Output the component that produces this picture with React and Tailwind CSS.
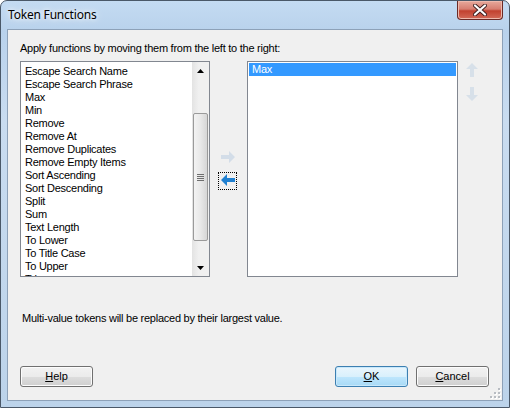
import { useState } from 'react'

const left = [
  'Escape Search Name',
  'Escape Search Phrase',
  'Max',
  'Min',
  'Remove',
  'Remove At',
  'Remove Duplicates',
  'Remove Empty Items',
  'Sort Ascending',
  'Sort Descending',
  'Split',
  'Sum',
  'Text Length',
  'To Lower',
  'To Title Case',
  'To Upper',
  'Trim',
]

const sans = { fontFamily: '"Liberation Sans", Arial, sans-serif' }

function WinButton({ label, mnemonic, rest, isDefault }) {
  return (
    <button
      type="button"
      className={`flex h-[21px] w-[73px] items-center justify-center rounded-[3px] border text-[11px] text-black ${
        isDefault
          ? 'border-[#3c7fb1] bg-[linear-gradient(#eaf6fd_0%,#d9f0fc_50%,#bee6fd_51%,#a7d9f5_100%)] shadow-[inset_0_0_0_1px_#c8e8fb]'
          : 'border-[#707070] bg-[linear-gradient(#f2f2f2_0%,#ebebeb_50%,#dddddd_51%,#cfcfcf_100%)] shadow-[inset_0_0_0_1px_#fcfcfc]'
      }`}
    >
      <span>
        <span className="underline">{mnemonic}</span>
        {rest}
      </span>
    </button>
  )
}

function Arrow({ dir, color }) {
  const paths = {
    right: 'M1 5h8V1l6 6-6 6V9H1z',
    left: 'M15 5H7V1L1 7l6 6V9h8z',
    up: 'M5 15V7H1l6-6 6 6H9v8z',
    down: 'M5 1v8H1l6 6 6-6H9V1z',
  }
  return (
    <svg width="16" height="16" viewBox="0 0 16 16">
      <path d={paths[dir]} fill={color} />
    </svg>
  )
}

export default function App() {
  const [selected] = useState('Max')

  return (
    <div
      className="flex h-[408px] w-[510px] flex-col overflow-hidden rounded-t-[7px] border border-[#4a5868] bg-[linear-gradient(180deg,#c4dbf2_0%,#b9d2ec_30px,#c9dcf0_120px,#bcd3ea_100%)]"
      style={sans}
    >
      {/* title bar */}
      <div className="flex h-[28px] shrink-0 items-start justify-between">
        <div
          className="pl-[7px] pt-[5px] text-[12px] tracking-[-0.2px] text-black"
          style={{ fontFamily: '"Noto Sans", "Open Sans", sans-serif', textShadow: '0 0 8px #fff, 0 0 4px #fff' }}
        >
          Token Functions
        </div>
        <div className="mr-[6px] flex h-[19px] w-[46px] items-center justify-center rounded-b-[4px] border border-t-0 border-[#6b2a26] bg-[linear-gradient(#e8a99c_0%,#d77e70_45%,#c2412f_55%,#d36a58_100%)] shadow-[inset_0_0_0_1px_#eeb9ad]">
          <svg width="14" height="12" viewBox="0 0 14 12">
            <path d="M2 1.5 12 10.5M12 1.5 2 10.5" stroke="#3f2020" strokeWidth="4" strokeLinecap="round" />
            <path d="M2 1.5 12 10.5M12 1.5 2 10.5" stroke="#ffffff" strokeWidth="2.2" strokeLinecap="round" />
          </svg>
        </div>
      </div>

      {/* client */}
      <div className="relative mx-[6px] mb-[6px] flex flex-1 flex-col border border-[#8da1b8] bg-[#f0f0f0] px-[12px] pt-[12px] text-[11px] tracking-[-0.25px] text-black">
        <div className="h-[13px] leading-[13px]">Apply functions by moving them from the left to the right:</div>

        <div className="mt-[6px] flex h-[216px]">
          {/* left list */}
          <div className="flex w-[190px] border border-[#828790] bg-white">
            <div className="flex-1 overflow-hidden pl-[4px] pt-[3px]">
              {left.map((item) => (
                <div key={item} className="h-[13px] whitespace-nowrap leading-[13px]">
                  {item}
                </div>
              ))}
            </div>
            <div className="flex w-[17px] flex-col bg-[linear-gradient(90deg,#e3e3e3,#f0f0f0_40%,#f0f0f0)]">
              <div className="flex h-[17px] items-center justify-center">
                <svg width="7" height="4" viewBox="0 0 7 4">
                  <path d="M0 4 3.5 0 7 4z" fill="#000" />
                </svg>
              </div>
              <div className="h-[34px]" />
              <div className="mx-[1px] flex h-[128px] items-center justify-center rounded-[2px] border border-[#9a9a9a] bg-[linear-gradient(90deg,#f3f3f3,#e8e8e8_50%,#d6d6d6)]">
                <div className="flex flex-col gap-[1px]">
                  <div className="h-[1px] w-[7px] bg-[#6e6e6e]" />
                  <div className="h-[1px] w-[7px] bg-[#6e6e6e]" />
                  <div className="h-[1px] w-[7px] bg-[#6e6e6e]" />
                  <div className="h-[1px] w-[7px] bg-[#6e6e6e]" />
                </div>
              </div>
              <div className="flex-1" />
              <div className="flex h-[17px] items-center justify-center">
                <svg width="7" height="4" viewBox="0 0 7 4">
                  <path d="M0 0 3.5 4 7 0z" fill="#000" />
                </svg>
              </div>
            </div>
          </div>

          {/* move buttons */}
          <div className="flex w-[37px] flex-col items-center pt-[89px]">
            <div className="ml-[-2px]">
              <Arrow dir="right" color="#d3dde8" />
            </div>
            <div className="mt-[6px] ml-[-2px] flex h-[18px] w-[19px] items-center justify-center border border-dotted border-black">
              <Arrow dir="left" color="#1f7fd0" />
            </div>
          </div>

          {/* right list */}
          <div className="w-[211px] border border-[#828790] bg-white p-[1px]">
            <div
              className={`h-[13px] pl-[3px] leading-[13px] ${
                selected === 'Max' ? 'bg-[#3399ff] text-white' : ''
              }`}
            >
              Max
            </div>
          </div>

          {/* order buttons */}
          <div className="flex flex-col pl-[7px] pt-[1px]">
            <Arrow dir="up" color="#d7e0e9" />
            <div className="mt-[8px]">
              <Arrow dir="down" color="#d7e0e9" />
            </div>
          </div>
        </div>

        <div className="mt-[35px] h-[13px] pl-[2px] leading-[13px]">
          Multi-value tokens will be replaced by their largest value.
        </div>

        <div className="mt-[41px] flex items-center pr-[1px] tracking-normal">
          <WinButton mnemonic="H" rest="elp" />
          <div className="flex-1" />
          <WinButton mnemonic="O" rest="K" isDefault />
          <div className="w-[8px]" />
          <WinButton mnemonic="C" rest="ancel" />
        </div>

        {/* size grip */}
        <svg className="absolute bottom-[1px] right-[1px]" width="11" height="11" viewBox="0 0 11 11">
          {[
            [8, 0],
            [8, 4],
            [4, 4],
            [8, 8],
            [4, 8],
            [0, 8],
          ].map(([x, y]) => (
            <g key={`${x}-${y}`}>
              <rect x={x + 1} y={y + 1} width="2" height="2" fill="#ffffff" />
              <rect x={x} y={y} width="2" height="2" fill="#b8bcc2" />
            </g>
          ))}
        </svg>
      </div>
    </div>
  )
}
